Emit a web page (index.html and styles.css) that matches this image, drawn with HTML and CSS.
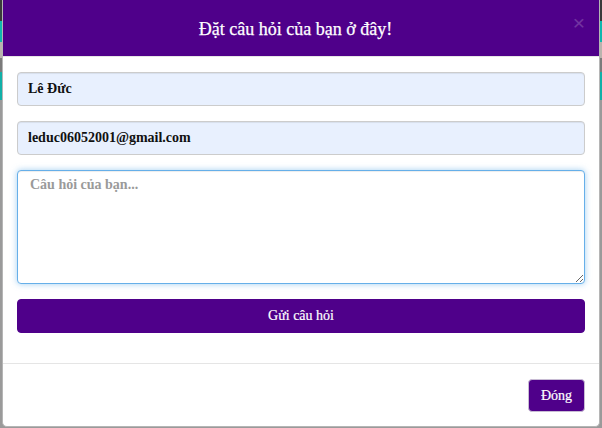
FILE: index.html
```html
<!DOCTYPE html>
<html lang="vi">
<head>
<meta charset="utf-8">
<title>Đặt câu hỏi</title>
<link rel="stylesheet" href="styles.css">
</head>
<body>
<div class="backdrop">
  <div class="modal">
    <div class="modal-header">
      <h4 class="modal-title">Đặt câu hỏi của bạn ở đây!</h4>
      <button class="close" type="button">×</button>
    </div>
    <div class="modal-body">
      <input class="field filled" type="text" value="Lê Đức">
      <input class="field filled" type="email" value="leduc06052001@gmail.com">
      <textarea class="field area" placeholder="Câu hỏi của bạn..."></textarea>
      <button class="btn btn-block" type="button">Gửi câu hỏi</button>
    </div>
    <div class="modal-footer">
      <button class="btn btn-close" type="button">Đóng</button>
    </div>
  </div>
</div>
</body>
</html>
```
FILE: styles.css
```css
* { box-sizing: border-box; }
html, body { margin: 0; padding: 0; height: 100%; }
body {
  font-family: "Liberation Serif", "Times New Roman", serif;
  background: linear-gradient(to bottom, #3a3a3a 0 21px, #0fb7ae 21px 42px, #b9b3ad 42px 58px, #7b7b7b 58px 72px, #10b0a8 72px 100px, #9a9a9a 100px);
  overflow: hidden;
}
.backdrop {
  height: 100%;
  padding-left: 2px;
}
.modal {
  width: 598px;
  height: 427px;
  background: #fff;
  border: 1px solid #b5b5b5;
  border-top: 0;
  border-radius: 0 0 5px 5px;
  display: flex;
  flex-direction: column;
  overflow: hidden;
}
.modal-header {
  position: relative;
  height: 56px;
  flex: none;
  background: #4f008a;
  display: flex;
  align-items: center;
  justify-content: center;
  padding: 0 26px 0 15px;
  box-shadow: 0 1px 0 #e5e5e5;
}
.modal-title {
  margin: 0;
  color: #fff;
  font-size: 18px;
  font-weight: normal;
  padding-top: 2px;
  -webkit-text-stroke: 0.25px #fff;
}
.close {
  position: absolute;
  right: 14px;
  top: 12px;
  background: none;
  border: 0;
  padding: 0;
  color: #fff;
  opacity: 0.2;
  font-family: "Liberation Sans", Arial, sans-serif;
  font-size: 21px;
  line-height: 1;
}
.modal-body {
  padding: 16px 14px 30px 14px;
  display: flex;
  flex-direction: column;
  gap: 15px;
  border-bottom: 1px solid #e5e5e5;
}
.field {
  display: block;
  width: 100%;
  height: 34px;
  padding: 6px 10px;
  font-family: "Liberation Serif", "Times New Roman", serif;
  font-size: 14px;
  font-weight: bold;
  color: #111;
  border: 1px solid #ccc;
  border-radius: 4px;
  box-shadow: inset 0 1px 1px rgba(0,0,0,0.075);
  outline: none;
}
.filled { background: #e8f0fe; }
.area {
  height: 114px;
  resize: vertical;
  background: #fff;
  border-color: #66afe9;
  box-shadow: inset 0 1px 1px rgba(0,0,0,0.075), 0 0 6px rgba(102,175,233,0.6);
  padding: 6px 12px;
}
.area::placeholder { color: #9a9a9a; opacity: 1; }
.btn {
  display: inline-block;
  height: 34px;
  padding: 6px 12px;
  background: #4f008a;
  color: #fff;
  border: 1px solid #4f008a;
  border-radius: 4px;
  font-family: "Liberation Serif", "Times New Roman", serif;
  font-size: 14px;
  font-weight: normal;
  -webkit-text-stroke: 0.2px #fff;
}
.btn-block { width: 100%; }
.modal-footer {
  padding: 15px 14px;
  display: flex;
  justify-content: flex-end;
}
.btn-close {
  height: 33px;
  width: 57px;
  padding: 6px 0;
  border-color: #c8bcd4;
}
```
